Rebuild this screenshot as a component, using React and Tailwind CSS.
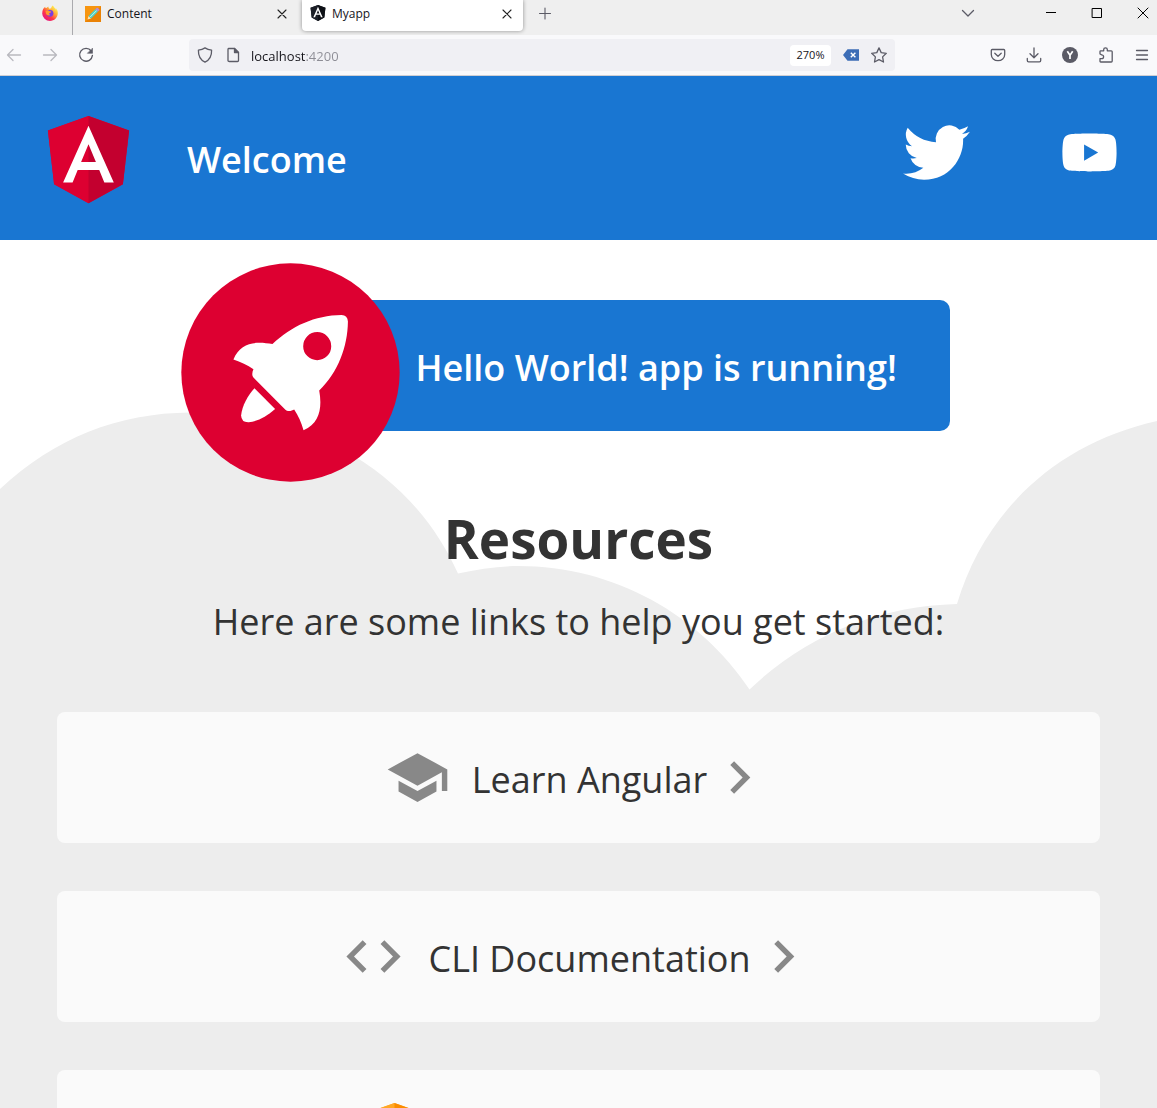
import React from "react";

const SHIELD_LEFT = "125,30 31.9,63.2 46.1,186.3 125,230";
const SHIELD_RIGHT = "125,30 125,230 203.9,186.3 218.1,63.2";
const SHIELD_OUTLINE = "125,30 31.9,63.2 46.1,186.3 125,230 203.9,186.3 218.1,63.2";
const SHIELD_A =
  "M125,52.1L66.8,182.6h21.7l11.7-29.2h49.4l11.7,29.2H183L125,52.1z M142,135.4H108l17-40.9L142,135.4z";

function Shield({ left, right, viewBox = "0 0 250 250", className }) {
  return (
    <svg viewBox={viewBox} className={className} aria-hidden="true">
      <polygon fill={left} points={SHIELD_OUTLINE} />
      <polygon fill={left} points={SHIELD_LEFT} />
      <polygon fill={right} points={SHIELD_RIGHT} />
      <path fill="#fff" d={SHIELD_A} />
    </svg>
  );
}

function Line({ children, className = "size-4 text-[#5b5b66]" }) {
  return (
    <svg
      viewBox="0 0 16 16"
      className={className}
      fill="none"
      stroke="currentColor"
      strokeWidth="1.3"
      strokeLinecap="round"
      strokeLinejoin="round"
      aria-hidden="true"
    >
      {children}
    </svg>
  );
}

function FirefoxIcon() {
  return (
    <svg viewBox="0 0 16 16" className="size-4" aria-hidden="true">
      <defs>
        <linearGradient id="fox" x1="0.85" y1="0.1" x2="0.15" y2="0.9">
          <stop offset="0" stopColor="#fff44f" />
          <stop offset="0.35" stopColor="#ffa436" />
          <stop offset="0.65" stopColor="#ff3647" />
          <stop offset="1" stopColor="#e31587" />
        </linearGradient>
      </defs>
      <path
        fill="url(#fox)"
        d="M15.3 5.3c-.4-.9-1.1-1.8-1.7-2.1.5.9.7 1.7.8 2.3-.9-2.2-2.4-3-3.6-5C10 .9 9.2 2.2 9.2 3.3c-.6 0-1.2.2-1.7.4-1-.5-1.1-1.6-1.1-2.2-.8.3-1.5.9-2 1.5-.9.1-1.2-.5-1.2-1.3C1.800 2.600.2 4.900.2 8.400A7.800 7.800 0 0 0 8 16c4.300 0 7.800-3.400 7.800-7.700 0-1-.1-2-.5-3z"
      />
      <circle cx="8" cy="8.3" r="3.4" fill="#7a3fe0" />
      <path fill="#ff9a2e" d="M3.5 6.2c1.300-1 3-.9 4.200.1 1 .1 1.500.3 1.500.7-.4.8-1.700.8-2 1.300-.2.9.3 1.500 1.200 1.700-1.700 1-3.900.1-4.500-1.500z" />
    </svg>
  );
}

function PencilIcon() {
  return (
    <svg viewBox="0 0 16 16" className="size-4" aria-hidden="true">
      <rect width="16" height="16" fill="#f7950f" />
      <path d="M0 16L16 0v16z" fill="#ea8205" />
      <path d="M2.500 13.500l1-3.500 2.600 2.600z" fill="#fde3b5" />
      <path d="M3.500 10L10.500 3l2.600 2.600-7 7z" fill="#4fd0c4" />
      <path d="M5 11.200l6.800-6.800" stroke="#c8f5ea" strokeWidth="1" />
      <path d="M10.500 3l1.100-1.100q.6-.5 1.200 0l1.400 1.400q.5.600 0 1.200l-1.100 1.100z" fill="#b98ad8" />
    </svg>
  );
}

function TabBar() {
  return (
    <div className="flex h-[35px] items-start bg-[#efefef] text-xs text-[#15141a]">
      <button aria-label="Firefox View" className="flex h-full w-[73px] items-start border-r border-[#aaaaae] pl-[42px] pt-[5px]">
        <FirefoxIcon />
      </button>
      <div className="flex h-[27px] w-[229px] items-center pl-3">
        <PencilIcon />
        <span className="ml-1.5 flex-1">Content</span>
        <button aria-label="Close Content" className="mr-3">
          <Line className="size-4 text-[#222]"><path strokeWidth="1.1" d="M4 4l8 8M12 4l-8 8" /></Line>
        </button>
      </div>
      <div className="flex h-[31px] w-[221px] items-center rounded-b bg-white pb-1 pl-2 shadow-[0_0_4px_rgba(0,0,0,0.4)]">
        <Shield left="#1b1f27" right="#0d1016" viewBox="25 30 200 200" className="mb-0.5 size-4" />
        <span className="ml-1.5 flex-1">Myapp</span>
        <button aria-label="Close Myapp" className="mr-2">
          <Line className="size-4 text-[#222]"><path strokeWidth="1.1" d="M4 4l8 8M12 4l-8 8" /></Line>
        </button>
      </div>
      <button aria-label="New tab" className="ml-3.5 mt-[6px]">
        <Line><path strokeWidth="1.1" d="M2.500 7.500h11M8 2v11" /></Line>
      </button>
      <div className="ml-auto flex h-[27px] items-center pr-1.5">
        <button aria-label="List all tabs" className="mr-[67px]">
          <Line><path d="M2.500 4.500L8 10l5.500-5.500" /></Line>
        </button>
        <button aria-label="Minimize" className="mr-[30px]">
          <Line className="size-4 text-black"><path strokeWidth="1" strokeLinecap="butt" d="M3 6.500h10" /></Line>
        </button>
        <button aria-label="Maximize" className="mr-[30px]">
          <Line className="size-4 text-black"><path strokeWidth="1" strokeLinejoin="miter" d="M3.500 2.500h9v9h-9z" /></Line>
        </button>
        <button aria-label="Close window">
          <Line className="size-4 text-black"><path strokeWidth="1" d="M3 2l10 10M13 2L3 12" /></Line>
        </button>
      </div>
    </div>
  );
}

function NavBar() {
  return (
    <div className="flex h-[41px] items-center border-b border-[#cfcfd4] bg-[#f9f9fb]">
      <div className="flex w-[189px] items-center gap-5 pl-1.5">
        <button aria-label="Back">
          <Line className="size-4 text-[#b9b9bf]"><path d="M14.500 8H1.500M7 2.500L1.500 8 7 13.500" /></Line>
        </button>
        <button aria-label="Forward">
          <Line className="size-4 text-[#b9b9bf]"><path d="M1.500 8h13M9 2.500L14.500 8 9 13.500" /></Line>
        </button>
        <button aria-label="Reload">
          <Line>
            <path strokeWidth="1.4" d="M13.200 4A6.400 6.400 0 1 0 14.400 8.500" />
            <path fill="currentColor" strokeWidth="0.6" d="M14.500 1.500v4.800H9.700z" />
          </Line>
        </button>
      </div>
      <div className="flex h-8 w-[706px] items-center rounded bg-[#f0f0f4] px-2">
        <Line><path d="M8 .9c2 1.400 4.200 2 6.600 2.200.2 5.200-1.600 9.800-6.600 12.100C3 12.900 1.200 8.300 1.400 3.100 3.800 2.900 6 2.300 8 .9z" /></Line>
        <Line className="ml-3 size-4 text-[#5b5b66]">
          <path d="M3.500 1.500h6l4 4v8q0 1-1 1h-8q-1.500 0-1.500-1v-11q0-1 .5-1z" />
          <path fill="currentColor" d="M9.500 1.500v4h4z" />
        </Line>
        <input
          type="text"
          aria-label="Address"
          defaultValue="localhost:4200"
          className="ml-2.5 mt-0.5 h-6 min-w-0 flex-1 bg-[linear-gradient(to_right,#15141a_54px,#8d8d95_54px)] bg-clip-text text-[13px] text-transparent caret-black outline-none"
        />
        <button className="h-[21px] w-[41px] rounded-sm bg-white text-[11px] text-[#15141a]">270%</button>
        <svg viewBox="0 0 16 12" className="ml-3 h-3 w-4" aria-label="Blocked" role="img">
          <path fill="#3c6db6" d="M0 6L4.500.3H16v11.400H4.500z" />
          <path stroke="#fff" strokeWidth="1.4" d="M7.800 3.700l4.600 4.600M12.400 3.700L7.800 8.300" />
        </svg>
        <button aria-label="Bookmark this page" className="ml-3">
          <Line><path d="M8 .9l2.200 4.700 5.100.7-3.700 3.600.9 5.100L8 12.600 3.500 15l.9-5.100L.7 6.300l5.100-.7z" /></Line>
        </button>
      </div>
      <div className="ml-auto flex items-center gap-5 pr-[7px]">
        <button aria-label="Save to Pocket">
          <Line>
            <path d="M2.200 2.500h11.600q.9 0 .9.900v4c0 3.700-3 6.300-6.700 6.300S1.300 11.100 1.300 7.400v-4q0-.9.900-.9z" />
            <path d="M4.800 6.300L8 9.300l3.200-3" />
          </Line>
        </button>
        <button aria-label="Downloads">
          <Line><path d="M8 1v9.500M4 6.800l4 3.900 4-3.900M1.300 11.500v2q0 1.300 1.300 1.300h10.800q1.300 0 1.300-1.300v-2" /></Line>
        </button>
        <button aria-label="Account">
          <svg viewBox="0 0 16 16" className="size-4" aria-hidden="true">
            <circle cx="8" cy="8" r="8" fill="#5b5b66" />
            <path d="M5.300 4.300L8 8.300l2.700-4M8 8.300V12" fill="none" stroke="#fff" strokeWidth="1.7" />
          </svg>
        </button>
        <button aria-label="Extensions">
          <Line><path d="M2 7V4.500q0-.7.7-.7h3V2.600a1.800 1.800 0 0 1 3.600 0v1.200h4q.9 0 .9.900v9.400q0 .9-.9.900H2.700q-.7 0-.7-.7v-2.700h1.700a1.900 1.900 0 0 0 0-3.800z" /></Line>
        </button>
        <button aria-label="Open menu">
          <Line><path d="M2.500 3.500h11M2.500 8h11M2.500 12.500h11" /></Line>
        </button>
      </div>
    </div>
  );
}

function Material({ path, className }) {
  return (
    <svg viewBox="0 0 24 24" className={className} fill="#888" aria-hidden="true">
      <path d={path} />
    </svg>
  );
}

const MATERIAL_ICON = "size-[65px] shrink-0";

function ResourceCard({ icon, children, name }) {
  return (
    <a href="#" aria-label={name} className="flex h-[131px] items-center justify-center rounded-lg bg-[#fafafa]">
      {icon}
      {children}
      <Material className={MATERIAL_ICON} path="M10 6L8.590 7.410 13.170 12l-4.580 4.590L10 18l6-6z" />
    </a>
  );
}

function Clouds() {
  return (
    <svg viewBox="0 410 1157 290" className="absolute inset-x-0 top-[170px] w-full" aria-hidden="true">
      <path
        fill="#ededed"
        d="M0 489C55 438 118 413 190 412.500C305 412 410 467 458 573.500C478 569 498 566 518 566C615 566 700 615 749.500 689.500C805 636 878 606 957 604C985 510 1058 443 1157 421V700H0Z"
      />
    </svg>
  );
}

function Rocket() {
  return (
    <svg viewBox="30 39 654 656" className="absolute -left-[27px] -top-[37px] size-[219px]" aria-hidden="true">
      <circle cx="357" cy="367" r="327" fill="#dd0031" />
      <path
        fill="#fff"
        fillRule="evenodd"
        d="M303 282C360 228 430 196 510 195Q528 196 529 214C528 290 500 365 443 421C452 470 446 520 396 540C390 518 380 496 368 478C360 483 348 485 341 478L248 384C240 377 242 366 246 357C228 345 208 336 186 328C208 275 255 273 303 282ZM395 288a42 42 0 1 0 84 0a42 42 0 1 0-84 0Z"
      />
      <path fill="#fff" d="M249 414L311 476C285 498 258 514 232 516Q210 517 209 496C212 465 230 435 249 414Z" />
    </svg>
  );
}

export default function App() {
  return (
    <div className="flex h-screen flex-col overflow-hidden bg-white font-['Open_Sans',sans-serif]">
      <TabBar />
      <NavBar />
      <div className="relative flex min-h-0 flex-1 flex-col overflow-hidden text-[#333]">
        <header className="flex h-[164px] shrink-0 items-center bg-[#1976d2] pl-[34px] pr-[35px] text-white">
          <Shield left="#dd0031" right="#c3002f" className="mb-0.5 size-[109px]" />
          <span className="ml-11 pt-1 text-[36px] font-semibold">Welcome</span>
          <a href="#" aria-label="Twitter" className="mb-3 ml-auto">
            <svg viewBox="0 0 400 400" className="size-[107px]" fill="#fff" aria-hidden="true">
              <path d="M153.620,301.590c94.340,0,145.940-78.160,145.940-145.940,0-2.220,0-4.430-.15-6.630A104.360,104.360,0,0,0,325,122.470a102.380,102.380,0,0,1-29.460,8.070,51.470,51.470,0,0,0,22.550-28.370,102.790,102.790,0,0,1-32.570,12.450,51.340,51.340,0,0,0-87.410,46.780A145.620,145.620,0,0,1,92.400,107.810a51.330,51.330,0,0,0,15.880,68.470A50.910,50.910,0,0,1,85,169.860c0,.21,0,.43,0,.65a51.310,51.310,0,0,0,41.150,50.280,51.210,51.210,0,0,1-23.160.88,51.350,51.350,0,0,0,47.920,35.620,102.920,102.920,0,0,1-63.700,22A104.410,104.410,0,0,1,75,278.550a145.210,145.210,0,0,0,78.620,23" />
            </svg>
          </a>
          <a href="#" aria-label="YouTube" className="mb-3 ml-[67px]">
            <svg viewBox="0 0 24 24" className="size-[65px]" fill="#fff" aria-hidden="true">
              <path d="M21.580 7.190c-.23-.86-.91-1.540-1.770-1.770C18.250 5 12 5 12 5s-6.250 0-7.810.42c-.86.23-1.540.91-1.770 1.770C2 8.750 2 12 2 12s0 3.250.42 4.810c.23.86.91 1.540 1.770 1.770C5.750 19 12 19 12 19s6.250 0 7.810-.42c.86-.23 1.540-.91 1.770-1.770C22 15.250 22 12 22 12s0-3.250-.42-4.810zM10 15V9l5.200 3-5.200 3z" />
            </svg>
          </a>
        </header>
        <main className="relative flex flex-1 flex-col bg-[linear-gradient(to_bottom,transparent_459px,#ededed_459px)]">
          <Clouds />
          <div className="relative mx-auto mt-[60px] flex h-[131px] min-w-[742px] shrink-0 items-center rounded-[10px] bg-[#1976d2] pl-[208px] text-white">
            <Rocket />
            <span className="pt-1 text-[36px] font-semibold">Hello World! app is running!</span>
          </div>
          <h2 className="relative mt-[70px] text-center text-[53px] font-bold leading-[75px]">Resources</h2>
          <p className="relative mt-5 text-center text-[36px] leading-[52px]">Here are some links to help you get started:</p>
          <div className="relative mx-[57px] mt-16 flex flex-col gap-12 text-[36px]">
            <ResourceCard
              icon={<Material className={MATERIAL_ICON} path="M5 13.180v4L12 21l7-3.820v-4L12 17l-7-3.820zM12 3L1 9l11 6 9-4.910V17h2V9L12 3z" />}
            >
              <span className="ml-[22px] pt-1">Learn Angular</span>
            </ResourceCard>
            <ResourceCard
              icon={<Material className={MATERIAL_ICON} path="M9.400 16.600L4.800 12l4.600-4.600L8 6l-6 6 6 6 1.400-1.400zm5.200 0l4.600-4.600-4.600-4.600L16 6l6 6-6 6-1.400-1.400z" />}
            >
              <span className="ml-[22px] pt-1">CLI Documentation</span>
            </ResourceCard>
            <ResourceCard
              name="More resources"
              icon={<Shield left="#ffa726" right="#fb8c00" viewBox="25 30 200 200" className="mr-[304px] size-[65px] shrink-0" />}
            />
          </div>
        </main>
      </div>
    </div>
  );
}
